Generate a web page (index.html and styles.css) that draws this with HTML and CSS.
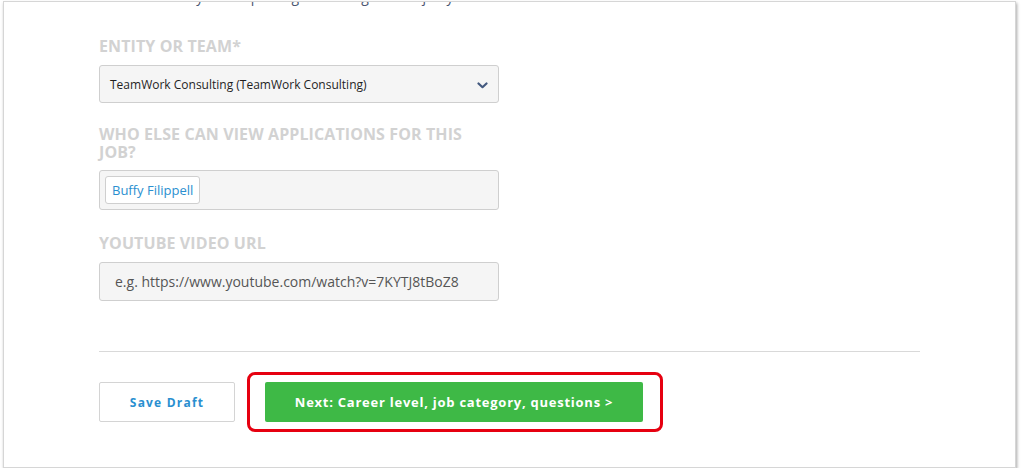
FILE: index.html
```html
<!DOCTYPE html>
<html lang="en">
<head>
<meta charset="utf-8">
<title>Post a job</title>
<link rel="stylesheet" href="styles.css">
</head>
<body>
<div class="window">
  <div class="form">
    <p class="help">Select the entity that is posting and hiring for this job you have now.</p>

    <div class="label label-first">ENTITY OR TEAM*</div>
    <div class="select">
      <span class="select-text">TeamWork Consulting (TeamWork Consulting)</span>
      <svg class="chevron" width="11" height="7" viewBox="0 0 11 7"><path d="M1.5 1.5 L5.5 5.2 L9.5 1.5" fill="none" stroke="#43597f" stroke-width="2.2" stroke-linecap="round" stroke-linejoin="round"/></svg>
    </div>

    <div class="label label-second">WHO ELSE CAN VIEW APPLICATIONS FOR THIS JOB?</div>
    <div class="tagbox">
      <span class="tag">Buffy Filippell</span>
    </div>

    <div class="label label-third">YOUTUBE VIDEO URL</div>
    <div class="input">e.g. https://www.youtube.com/watch?v=7KYTJ8tBoZ8</div>
  </div>

  <div class="divider"></div>

  <div class="actions">
    <button class="btn btn-draft">Save Draft</button>
    <button class="btn btn-next">Next: Career level, job category, questions &gt;</button>
  </div>
</div>
</body>
</html>
```

FILE: styles.css
```css
html, body {
  margin: 0;
  padding: 0;
  background: #ffffff;
}

body {
  font-family: "Open Sans", "Liberation Sans", Arial, sans-serif;
  color: #222;
}

.window {
  box-sizing: border-box;
  margin: 1px 5px 0 3px;
  height: 467px;
  border: 1px solid #d6d6d6;
  background: #fff;
  box-shadow: 1px 2px 3px rgba(0, 0, 0, 0.35);
  overflow: hidden;
  padding-left: 95px;
}

.form {
  display: flex;
  flex-direction: column;
  width: 400px;
}

.help {
  margin: -15px 0 0 0;
  font-size: 14px;
  line-height: 20px;
  color: #4a5570;
  white-space: nowrap;
}

.label {
  font-size: 16px;
  font-weight: 700;
  line-height: 18px;
  color: #d2d2d2;
  letter-spacing: 0.1px;
}

.label-first { margin-top: 30px; }
.label-second { margin-top: 22px; }
.label-third { margin-top: 24px; }

.select {
  box-sizing: border-box;
  margin-top: 10px;
  height: 38px;
  border: 1px solid #cfcfcf;
  border-radius: 3px;
  background: #f5f5f5;
  display: flex;
  align-items: center;
  justify-content: space-between;
  padding: 0 10px 0 10px;
}

.select-text {
  font-size: 12px;
  color: #1f1f1f;
}

.chevron {
  display: block;
  margin-top: 2px;
}

.tagbox {
  box-sizing: border-box;
  margin-top: 9px;
  height: 40px;
  border: 1px solid #cfcfcf;
  border-radius: 3px;
  background: #f5f5f5;
  display: flex;
  align-items: flex-start;
  padding: 5px 5px;
}

.tag {
  box-sizing: border-box;
  height: 28px;
  display: flex;
  align-items: center;
  padding: 0 6px;
  background: #fff;
  border: 1px solid #cfcfcf;
  border-radius: 3px;
  font-size: 13px;
  color: #2a8fd0;
}

.input {
  box-sizing: border-box;
  margin-top: 10px;
  height: 39px;
  border: 1px solid #cfcfcf;
  border-radius: 3px;
  background: #f5f5f5;
  display: flex;
  align-items: center;
  padding: 0 15px;
  font-size: 14px;
  color: #555;
}

.divider {
  margin-top: 50px;
  width: 821px;
  height: 1px;
  background: #d9d9d9;
}

.actions {
  margin-top: 30px;
  display: flex;
  align-items: center;
}

.btn {
  box-sizing: border-box;
  height: 40px;
  border-radius: 2px;
  font-family: "Open Sans", "Liberation Sans", Arial, sans-serif;
  font-weight: 700;
  font-size: 12px;
  cursor: pointer;
}

.btn-draft {
  width: 136px;
  background: #fff;
  border: 1px solid #d4d4d4;
  color: #2a8fd0;
  letter-spacing: 1.2px;
}

.btn-next {
  position: relative;
  margin-left: 30px;
  width: 378px;
  background: #3eb946;
  border: none;
  color: #fff;
  font-size: 13px;
  letter-spacing: 0.75px;
}

.btn-next::after {
  content: "";
  position: absolute;
  top: -10px;
  bottom: -10px;
  left: -18px;
  right: -20px;
  border: 3px solid #e60010;
  border-radius: 8px;
  pointer-events: none;
}
```
